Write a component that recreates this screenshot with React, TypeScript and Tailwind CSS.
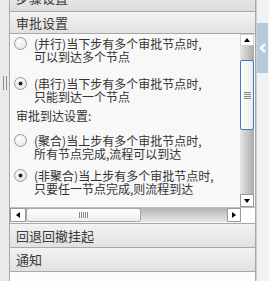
import React from "react";

const font = { fontFamily: '"Noto Sans CJK SC", "Liberation Sans", sans-serif' };

function Radio({ checked }: { checked?: boolean }) {
  return (
    <svg width="13" height="13" viewBox="0 0 13 13" className="shrink-0">
      <defs>
        <radialGradient id="rg" cx="0.4" cy="0.35" r="0.7">
          <stop offset="0" stopColor="#ffffff" />
          <stop offset="1" stopColor="#e4e4e4" />
        </radialGradient>
      </defs>
      <circle cx="6.5" cy="6.5" r="6" fill="url(#rg)" stroke="#9a9a9a" />
      {checked && <circle cx="6.5" cy="6.5" r="2" fill="#222" />}
    </svg>
  );
}

function Option({
  checked,
  tag,
  line1,
  line2,
  className,
}: {
  checked?: boolean;
  tag: string;
  line1: string;
  line2: string;
  className?: string;
}) {
  return (
    <div className={`flex items-start pl-[4px] ${className ?? ""}`}>
      <Radio checked={checked} />
      <div className="ml-[7px] whitespace-nowrap text-[12px] leading-[13px] text-[#333]">
        <div>
          ({tag})当{line1}
        </div>
        <div>{line2}</div>
      </div>
    </div>
  );
}

function Header({ label, className }: { label: string; className?: string }) {
  return (
    <div
      className={`flex items-center border-b border-[#a8a8a8] bg-gradient-to-b from-[#f3f3f3] to-[#e1e1e1] pl-[6px] text-[13px] text-[#3a3a3a] ${className ?? ""}`}
    >
      {label}
    </div>
  );
}

function VScrollbar() {
  return (
    <div className="flex w-[14px] flex-col">
      <div className="flex h-[12px] items-center justify-center border border-[#cfcfcf] bg-white">
        <span className="h-0 w-0 border-x-[3px] border-b-[4px] border-x-transparent border-b-black" />
      </div>
      <div className="flex flex-1 flex-col bg-gradient-to-r from-[#e6e6e6] to-[#a9a9a9]">
        <div className="h-[14px]" />
        <div className="flex h-[70px] flex-col items-center justify-center gap-[1px] rounded-[2px] border border-[#3d7bc2] bg-gradient-to-r from-white to-[#ececec]">
          <span className="h-px w-[7px] bg-[#888]" />
          <span className="h-px w-[7px] bg-[#888]" />
          <span className="h-px w-[7px] bg-[#888]" />
          <span className="h-px w-[7px] bg-[#888]" />
        </div>
      </div>
      <div className="flex h-[13px] items-center justify-center border border-[#9a9a9a] bg-white">
        <span className="h-0 w-0 border-x-[3px] border-t-[4px] border-x-transparent border-t-black" />
      </div>
    </div>
  );
}

function HScrollbar() {
  return (
    <div className="flex h-[15px] border-t border-[#bdbdbd]">
      <div className="flex w-[16px] items-center justify-center border border-[#9a9a9a] bg-white">
        <span className="h-0 w-0 border-y-[3px] border-r-[4px] border-y-transparent border-r-black" />
      </div>
      <div className="flex flex-1 bg-gradient-to-b from-[#b4b4b4] to-[#e9e9e9]">
        <div className="flex w-[115px] items-center justify-center gap-[1px] rounded-[3px] border border-[#a5a5a5] bg-gradient-to-b from-white to-[#eeeeee]">
          <span className="h-[6px] w-px bg-[#888]" />
          <span className="h-[6px] w-px bg-[#888]" />
          <span className="h-[6px] w-px bg-[#888]" />
          <span className="h-[6px] w-px bg-[#888]" />
          <span className="h-[6px] w-px bg-[#888]" />
        </div>
      </div>
      <div className="flex w-[14px] items-center justify-center border border-[#9a9a9a] bg-white">
        <span className="h-0 w-0 border-y-[3px] border-l-[4px] border-y-transparent border-l-black" />
      </div>
      <div className="w-[14px] bg-white" />
    </div>
  );
}

export default function App() {
  return (
    <div className="flex h-[281px] w-[269px] overflow-hidden bg-[#f2f2f2]" style={font}>
      {/* left splitter */}
      <div className="relative w-[10px] border-r border-[#a8a8a8] bg-[#eaeaea]">
        <div className="absolute left-[3px] top-[76px] flex gap-[2px]">
          <span className="h-[14px] w-px bg-[#8a8a8a]" />
          <span className="h-[14px] w-px bg-[#8a8a8a]" />
        </div>
      </div>

      {/* panel */}
      <div className="flex w-[246px] flex-col border-r border-[#a8a8a8] bg-[#fafafa]">
        <div className="h-[12px] overflow-hidden border-b border-[#a8a8a8] bg-gradient-to-b from-[#e6e6e6] to-[#dcdcdc]">
          <div className="-mt-[12px] pl-[6px] text-[13px] leading-[20px] text-[#333]">步骤设置</div>
        </div>
        <Header label="审批设置" className="h-[22px]" />

        <div className="flex h-[173px]">
          <div className="flex-1 overflow-hidden bg-[#f8f8f8] pt-[3px]">
            <Option tag="并行" line1="下步有多个审批节点时," line2="可以到达多个节点" />
            <Option checked tag="串行" line1="下步有多个审批节点时," line2="只能到达一个节点" className="mt-[14px]" />
            <div className="mt-[6px] pl-[6px] text-[12px] leading-[13px] text-[#333]">审批到达设置:</div>
            <Option tag="聚合" line1="上步有多个审批节点时," line2="所有节点完成,流程可以到达" className="mt-[12px]" />
            <Option checked tag="非聚合" line1="上步有多个审批节点时," line2="只要任一节点完成,则流程到达" className="mt-[9px]" />
          </div>
          <VScrollbar />
          <div className="w-px" />
        </div>
        <HScrollbar />

        <div className="h-[2px] border-b border-[#a8a8a8]" />
        <Header label="回退回撤挂起" className="h-[24px]" />
        <Header label="通知" className="h-[24px]" />
        <div className="flex-1 bg-[#fbfbfb]" />
      </div>

      {/* right collapse strip */}
      <div className="flex w-[12px] flex-col border-l border-[#d0d0d0]">
        <div className="h-[23px]" />
        <div className="flex h-[50px] items-center justify-center bg-[#b9c9dd]">
          <svg width="7" height="10" viewBox="0 0 7 10">
            <path d="M6 1 L2 5 L6 9" fill="none" stroke="#fff" strokeWidth="2.2" />
          </svg>
        </div>
      </div>
    </div>
  );
}
